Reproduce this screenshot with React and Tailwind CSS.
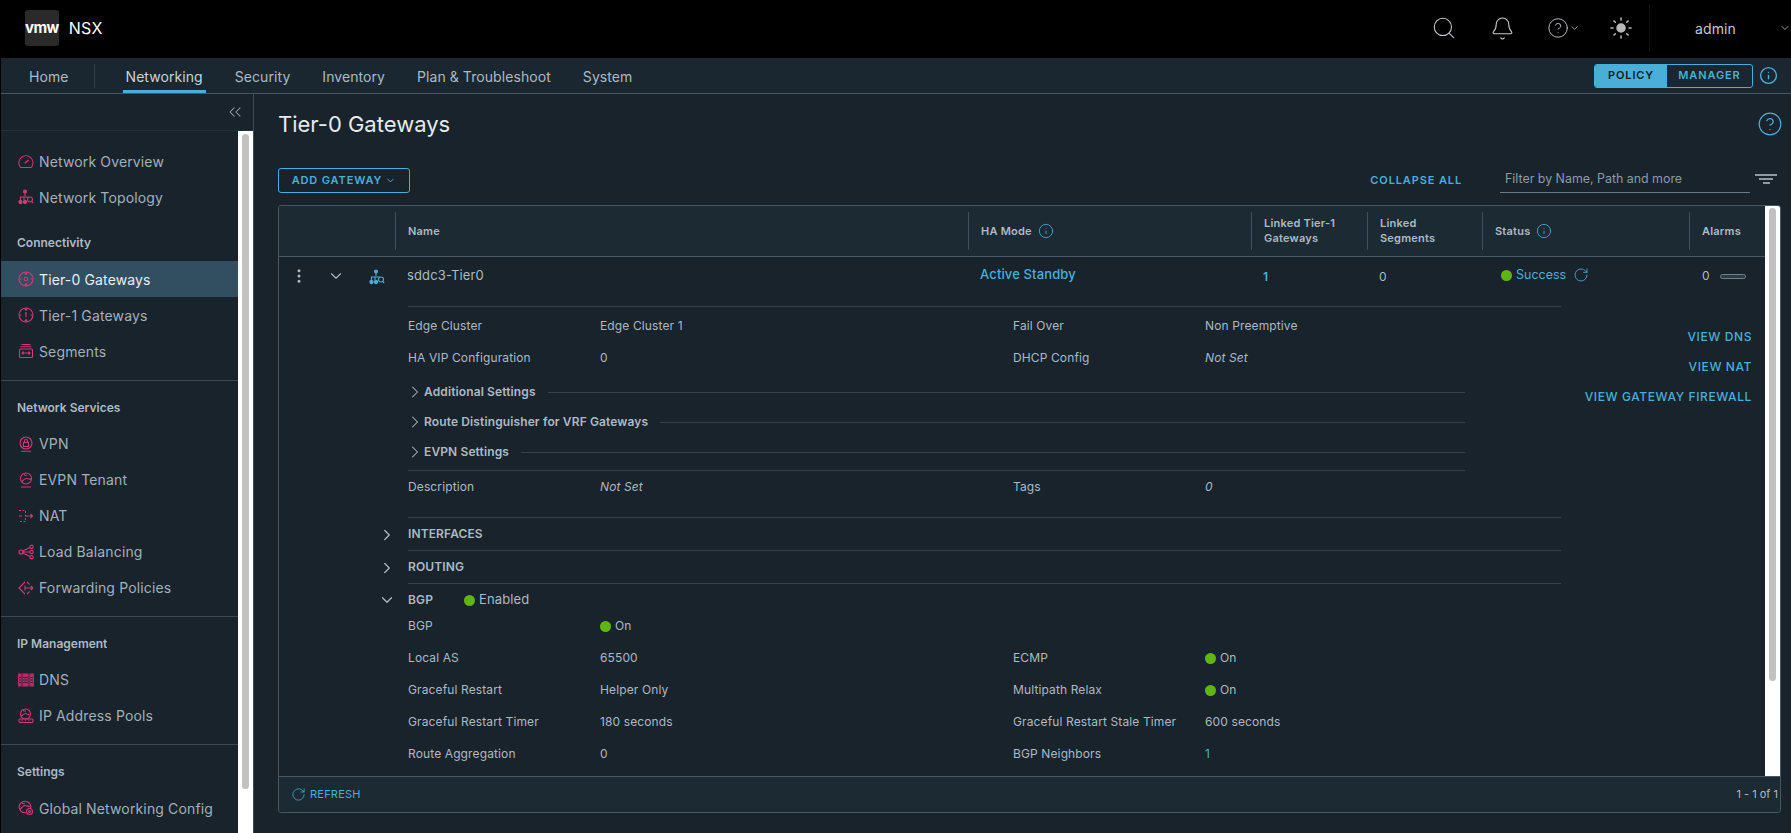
import {
  Bell,
  ChevronDown,
  ChevronRight,
  ChevronsLeft,
  CircleHelp,
  EllipsisVertical,
  Info,
  RotateCw,
  Search,
  Sun,
} from "lucide-react";

const font = { fontFamily: '"Inter", "Noto Sans", sans-serif' };

function Svg({ children, className = "text-[#d8357a]" }) {
  return (
    <svg viewBox="0 0 16 16" fill="none" stroke="currentColor" strokeWidth="1.1" className={`w-[16px] h-[16px] shrink-0 ${className}`}>
      {children}
    </svg>
  );
}

const GaugeIcon = () => (
  <Svg>
    <path d="M3 14.5h10a1.5 1.5 0 0 0 1-1.2A7 7 0 1 0 1.9 13.3a1.5 1.5 0 0 0 1.1 1.2z" />
    <path d="M6.8 10.2l3.8-3.2" strokeWidth="1.5" />
  </Svg>
);

const TopologyIcon = ({ className }) => (
  <Svg className={className}>
    <circle cx="7" cy="2.5" r="1.5" fill="currentColor" />
    <path d="M7 4v3M2.5 11V8h8M6 8v3" />
    <circle cx="2.5" cy="13" r="1.6" fill="currentColor" />
    <circle cx="7" cy="13" r="1.6" fill="currentColor" />
    <circle cx="12" cy="10.5" r="2.5" />
    <path d="M13.7 12.4l1.5 1.8" />
  </Svg>
);

const TierIcon = ({ label }) => (
  <Svg>
    <circle cx="8" cy="8" r="7" />
    <path d="M8 1.5v2.5M8 12v2.5M1.5 8h2M12.5 8h2M6.8 2.8L8 1.6l1.2 1.2M6.8 13.2L8 14.4l1.2-1.2" />
    {label === "0" ? <circle cx="8" cy="8" r="1.8" /> : <path d="M7 6.5L8 5.8V10.2" />}
  </Svg>
);

const SegmentsIcon = () => (
  <Svg>
    <rect x="1.5" y="6" width="13" height="8.5" rx="1" />
    <path d="M3.5 1.5h9M2.5 3.8h11M4 10h8M5.5 8.5L4 10l1.5 1.5M10.5 8.5L12 10l-1.5 1.5" />
  </Svg>
);

const VpnIcon = () => (
  <Svg>
    <circle cx="8" cy="7" r="6" />
    <rect x="5.5" y="6.5" width="5" height="4" />
    <path d="M6.5 6.5V5a1.5 1.5 0 0 1 3 0v1.5M3 15.2h10" />
  </Svg>
);

const EvpnIcon = () => (
  <Svg>
    <circle cx="8" cy="6.5" r="5.5" />
    <path d="M3.5 9.5c2-1 2.5-3 5-3s3 1 4.5 .5M6 1.5c0 2 2 2 3 1.5M3 15h10" />
  </Svg>
);

const NatIcon = () => (
  <Svg>
    <path d="M1 2.5h6.5V13.5H1" strokeDasharray="2 1.5" />
    <path d="M1 8h3M7.5 8h7M12.5 6l2 2-2 2" />
  </Svg>
);

const ShareIcon = () => (
  <Svg>
    <circle cx="3" cy="8" r="2" />
    <circle cx="13.5" cy="2.8" r="1.7" />
    <circle cx="13.5" cy="8" r="1.7" />
    <circle cx="13.5" cy="13.2" r="1.7" />
    <path d="M5 8h7M4.8 7l7.2-3.5M4.8 9l7.2 3.5" />
  </Svg>
);

const ForwardIcon = () => (
  <Svg>
    <path d="M7 2L1 8l6 6M9 2l2.5 2.5M9 14l2.5-2.5" />
    <path d="M7 5.5v5M7 8h8M12.8 6l2 2-2 2" />
  </Svg>
);

const DnsIcon = () => (
  <svg viewBox="0 0 16 16" className="w-[16px] h-[16px] shrink-0 text-[#b32c68]">
    <rect x="0" y="1.5" width="16" height="13" fill="currentColor" />
    <path d="M4 1.5v13M11 1.5v13M1 5.5h2M1 8h2M1 10.5h2M5 5.5h5M5 8h5M5 10.5h5M12 5.5h3M12 8h3M12 10.5h3" stroke="#18232c" strokeWidth="0.8" />
  </svg>
);

const PoolIcon = () => (
  <Svg>
    <circle cx="7.5" cy="6" r="5" />
    <path d="M3.5 8c1.5-1 2-2.5 4-2.5S10 7 11.5 6.5M5 1.5c0 2 2 1.5 3 1.5" />
    <rect x="1" y="11" width="14" height="3.5" rx="1" />
    <path d="M3.5 12.8h1M7 12.8h1M10.5 12.8h1" />
  </Svg>
);

const GlobalIcon = () => (
  <Svg>
    <circle cx="7" cy="7" r="5.8" />
    <path d="M2 9c2-1 2.5-3.5 5-3.5S9 7 12 6.5M4 2c0 2 2 2 3 1.5" />
    <circle cx="11.5" cy="11.5" r="3" fill="#18232c" />
    <circle cx="11.5" cy="11.5" r="1" />
  </Svg>
);

const sideGroups = [
  {
    title: null,
    items: [
      ["Network Overview", <GaugeIcon />],
      ["Network Topology", <TopologyIcon />],
    ],
  },
  {
    title: "Connectivity",
    items: [
      ["Tier-0 Gateways", <TierIcon label="0" />, true],
      ["Tier-1 Gateways", <TierIcon label="1" />],
      ["Segments", <SegmentsIcon />],
    ],
  },
  {
    title: "Network Services",
    items: [
      ["VPN", <VpnIcon />],
      ["EVPN Tenant", <EvpnIcon />],
      ["NAT", <NatIcon />],
      ["Load Balancing", <ShareIcon />],
      ["Forwarding Policies", <ForwardIcon />],
    ],
  },
  {
    title: "IP Management",
    items: [
      ["DNS", <DnsIcon />],
      ["IP Address Pools", <PoolIcon />],
    ],
  },
  {
    title: "Settings",
    items: [["Global Networking Config", <GlobalIcon />]],
  },
];

function Sidebar() {
  return (
    <aside className="w-[253px] shrink-0 flex flex-col border-r border-[#3c4c58] overflow-hidden">
      <div className="h-[37px] shrink-0 flex items-center justify-end pr-[8px] border-b border-[#22303a]">
        <ChevronsLeft className="w-[20px] h-[20px] text-[#8c9ba5]" strokeWidth={1.25} />
      </div>
      <div className="flex flex-1 min-h-0">
        <div className="w-[237px] shrink-0 pt-[12px]">
          {sideGroups.map((group, i) => (
            <div key={i} className={i > 1 ? "border-t border-[#3b4a56] pt-[9px] pb-[10.3px]" : "pb-[10.3px]"}>
              {group.title && (
                <div className="h-[36px] flex items-center pl-[16px] text-[12px] font-semibold text-[#acbac3]">{group.title}</div>
              )}
              {group.items.map(([label, icon, active]) => (
                <div
                  key={label}
                  className={`h-[36px] flex items-center gap-[5px] pl-[17px] text-[14px] tracking-[0.01em] ${
                    active ? "bg-[#324f62] text-[#e9edf0]" : "text-[#a3b0b9]"
                  }`}
                >
                  {icon}
                  <span>{label}</span>
                </div>
              ))}
            </div>
          ))}
        </div>
        <div className="flex-1 bg-white px-[4px] pt-[3px]">
          <div className="h-[655px] rounded-[4px] bg-[#c1c1c1]" />
        </div>
      </div>
    </aside>
  );
}

function Dot() {
  return <span className="block w-[11px] h-[11px] rounded-full bg-[#60b515] shrink-0" />;
}

function Pair({ label, value, label2, value2 }) {
  return (
    <div className="grid grid-cols-[192px_413px_192px_1fr] h-[32px] items-center text-[12px] tracking-[0.01em] text-[#acbac3]">
      <span>{label}</span>
      <span className="flex items-center gap-[4px]">{value}</span>
      <span>{label2}</span>
      <span className="flex items-center gap-[4px]">{value2}</span>
    </div>
  );
}

function SubSection({ label }) {
  return (
    <div className="h-[30px] w-[1057px] flex items-center">
      <ChevronRight className="w-[20px] h-[20px] text-[#acbac3] -ml-[3px] -mr-[1px]" strokeWidth={1.25} />
      <span className="text-[12px] font-semibold tracking-[0.01em] text-[#acbac3] mr-[12px]">{label}</span>
      <span className="flex-1 border-t border-[#33424d]" />
    </div>
  );
}

function SectionHead({ open, label, extra, className = "h-[33px]" }) {
  const Chevron = open ? ChevronDown : ChevronRight;
  return (
    <div className={`flex ${className}`}>
      <div className="w-[129px] shrink-0 flex items-center justify-end pr-[12px]">
        <Chevron className="w-[18px] h-[18px] text-[#acbac3]" strokeWidth={1.75} />
      </div>
      <div className={`flex-1 flex items-center text-[12px] font-semibold tracking-[0.01em] text-[#acbac3] ${open ? "" : "border-b border-[#33424d]"}`}>
        <span className="w-[56px]">{label}</span>
        {extra}
      </div>
    </div>
  );
}

const cols = "grid grid-cols-[116px_573px_283px_116px_115px_207px_76px]";

function HeadCell({ children }) {
  return (
    <div className="my-[6px] border-l border-[#3f4f5b] pl-[12px] flex items-center gap-[6px] text-[11px] leading-[15px] font-semibold text-[#acbac3] tracking-[0.02em]">
      {children}
    </div>
  );
}

function GatewayTable() {
  return (
    <div className="mt-[12px] h-[608px] border border-[#475864] rounded-[3px] flex flex-col overflow-hidden">
      <div className="flex flex-1 min-h-0">
        <div className="w-[1486px] shrink-0 overflow-hidden">
          <div className={`${cols} h-[51px] bg-[#1c2a34] border-b border-[#475864]`}>
            <div />
            <HeadCell>Name</HeadCell>
            <HeadCell>
              HA Mode <Info className="w-[16px] h-[16px] text-[#49afd9]" strokeWidth={1.25} />
            </HeadCell>
            <HeadCell>
              <span>
                Linked Tier-1
                <br />
                Gateways
              </span>
            </HeadCell>
            <HeadCell>
              <span>
                Linked
                <br />
                Segments
              </span>
            </HeadCell>
            <HeadCell>
              Status <Info className="w-[16px] h-[16px] text-[#49afd9]" strokeWidth={1.25} />
            </HeadCell>
            <HeadCell>Alarms</HeadCell>
          </div>

          <div className={`${cols} h-[49px] text-[12px] text-[#acbac3]`}>
            <div className="flex items-start pt-[10px] pl-[11px]">
              <EllipsisVertical className="w-[18px] h-[18px] text-[#acbac3]" />
              <ChevronDown className="w-[18px] h-[18px] ml-[19px]" strokeWidth={1.5} />
              <span className="ml-[24px] mt-[2px]">
                <TopologyIcon className="text-[#49afd9]" />
              </span>
            </div>
            <div className="pl-[12px] pt-[9px] text-[13px] tracking-[0.01em]">sddc3-Tier0</div>
            <div className="pl-[12px] pt-[8px] text-[13px] tracking-[0.01em] text-[#49afd9] font-medium">Active Standby</div>
            <div className="pl-[12px] pt-[11px] text-[#49afd9] font-semibold">1</div>
            <div className="pl-[12px] pt-[11px]">0</div>
            <div className="pl-[19px] pt-[8px] flex items-start gap-[4px] text-[12.5px] leading-[20px] text-[#49afd9]">
              <span className="mt-[5px]">
                <Dot />
              </span>
              Success
              <RotateCw className="w-[16px] h-[16px] ml-[3px] mt-[2px]" strokeWidth={1.25} />
            </div>
            <div className="pl-[13px] pt-[10px] flex items-start gap-[10px]">
              0<span className="mt-[7px] w-[26px] h-[5px] rounded-full border border-[#6f808c] bg-[#2d3b45]" />
            </div>
          </div>

          <div className="flex">
            <div className="w-[1282px] shrink-0">
              <div className="ml-[129px] border-t border-[#33424d] pt-[3px]">
                <Pair label="Edge Cluster" value="Edge Cluster 1" label2="Fail Over" value2="Non Preemptive" />
                <Pair label="HA VIP Configuration" value="0" label2="DHCP Config" value2={<em>Not Set</em>} />
                <div className="pt-[3px]">
                  <SubSection label="Additional Settings" />
                  <SubSection label="Route Distinguisher for VRF Gateways" />
                  <SubSection label="EVPN Settings" />
                </div>
                <div className="w-[1057px] mt-[3px] border-t border-[#33424d]" />
                <Pair label="Description" value={<em>Not Set</em>} label2="Tags" value2={<em>0</em>} />
              </div>
              <div className="ml-[129px] h-[15px] border-b border-[#33424d]" />
              <SectionHead label="INTERFACES" />
              <SectionHead label="ROUTING" />
              <SectionHead
                open
                label="BGP"
                className="h-[29px] pt-[3px]"
                extra={
                  <span className="flex items-center gap-[4px] text-[13px] font-normal">
                    <Dot /> Enabled
                  </span>
                }
              />
              <div className="ml-[129px] -mt-[3px]">
                <Pair label="BGP" value={<><Dot /> On</>} />
                <Pair label="Local AS" value="65500" label2="ECMP" value2={<><Dot /> On</>} />
                <Pair label="Graceful Restart" value="Helper Only" label2="Multipath Relax" value2={<><Dot /> On</>} />
                <Pair label="Graceful Restart Timer" value="180 seconds" label2="Graceful Restart Stale Timer" value2="600 seconds" />
                <Pair label="Route Aggregation" value="0" label2="BGP Neighbors" value2={<span className="text-[#49afd9]">1</span>} />
              </div>
            </div>
            <div className="flex-1 flex flex-col items-end pr-[13px] pt-[23px] gap-[14px] text-[12px] leading-[16px] font-medium tracking-[0.05em] text-[#49afd9] whitespace-nowrap">
              <span>VIEW DNS</span>
              <span>VIEW NAT</span>
              <span>VIEW GATEWAY FIREWALL</span>
            </div>
          </div>
        </div>
        <div className="flex-1 bg-white px-[4px] pt-[2px]">
          <div className="h-[473px] rounded-[4px] bg-[#c1c1c1]" />
        </div>
      </div>
      <div className="h-[36px] shrink-0 bg-[#1c2a34] border-t border-[#475864] flex items-center pl-[12px] pr-[2px] text-[11px]">
        <RotateCw className="w-[15px] h-[15px] text-[#49afd9]" strokeWidth={1.25} />
        <span className="ml-[4px] tracking-[0.02em] text-[#49afd9]">REFRESH</span>
        <span className="ml-auto text-[#acbac3]">1 - 1 of 1</span>
      </div>
    </div>
  );
}

export default function App() {
  return (
    <div className="h-screen w-screen overflow-hidden bg-black pl-px flex flex-col" style={font}>
      <header className="h-[58px] shrink-0 flex items-center bg-black pb-[2px]">
        <div className="ml-[24px] w-[36px] h-[36px] rounded-[3px] bg-[#2a2a2a] flex items-center justify-center text-white font-bold text-[15px] tracking-[-0.04em]">
          vmw
        </div>
        <span className="ml-[10px] text-[16px] text-white tracking-[0.02em]">NSX</span>
        <Search className="ml-[1328px] w-[28px] h-[28px] text-[#c5c9cc]" strokeWidth={1} />
        <Bell className="ml-[33px] w-[27px] h-[27px] text-[#c5c9cc]" strokeWidth={1} />
        <CircleHelp className="ml-[32px] w-[24px] h-[24px] text-[#c5c9cc]" strokeWidth={1} />
        <ChevronDown className="w-[12px] h-[12px] text-[#9aa1a6]" />
        <Sun className="ml-[29px] w-[26px] h-[26px] text-[#b8b8b8]" fill="currentColor" strokeWidth={1.5} />
        <span className="ml-[16px] h-[48px] border-l border-[#111111]" />
        <span className="ml-[45px] text-[14px] tracking-[0.01em] text-[#c5c9cc]">admin</span>
        <ChevronDown className="ml-[43px] w-[12px] h-[12px] shrink-0 text-[#9aa1a6]" />
      </header>

      <nav className="h-[36px] shrink-0 flex items-center bg-[#1a2730] border-b border-[#475864] pl-[28px] text-[14px] tracking-[0.005em] text-[#acbac3]">
        <span className="pt-[2px]">Home</span>
        <span className="ml-[25px] h-[24px] border-l border-[#33424d]" />
        <div className="ml-[28px] flex gap-[26px] h-full">
          <span className="px-[3px] h-full flex items-center border-b-[3px] border-[#49afd9] pt-[4px] text-[#c9d3d9] -mb-px">Networking</span>
          <span className="px-[3px] pt-[2px] flex items-center">Security</span>
          <span className="px-[3px] pt-[2px] flex items-center">Inventory</span>
          <span className="px-[3px] pt-[2px] flex items-center">Plan &amp; Troubleshoot</span>
          <span className="px-[3px] pt-[2px] flex items-center">System</span>
        </div>
        <div className="ml-auto flex items-center mr-[13px]">
          <div className="flex h-[24px] w-[159px] border border-[#49afd9] rounded-[3px] overflow-hidden text-[11px] font-semibold tracking-[0.08em]">
            <span className="w-[72px] bg-[#49afd9] text-[#0f1c25] flex items-center justify-center">POLICY</span>
            <span className="flex-1 text-[#49afd9] flex items-center justify-center">MANAGER</span>
          </div>
          <Info className="ml-[6px] w-[19px] h-[19px] text-[#49afd9]" strokeWidth={1.75} />
        </div>
      </nav>

      <div className="flex flex-1 min-h-0 bg-[#18232c]">
        <Sidebar />
        <main className="flex-1 min-w-0 pl-[24px] pr-[10px]">
          <div className="h-[60px] flex items-center justify-between">
            <h1 className="text-[22px] text-[#e6eaed]">Tier-0 Gateways</h1>
            <CircleHelp className="-mr-[2px] w-[26px] h-[26px] text-[#49afd9]" strokeWidth={1.1} />
          </div>
          <div className="mt-[14px] h-[25px] flex items-center">
            <button className="h-[25px] w-[132px] pb-[1px] border border-[#49afd9] rounded-[3px] flex items-center justify-center gap-[3px] text-[11px] font-semibold tracking-[0.08em] text-[#49afd9]">
              ADD GATEWAY <ChevronDown className="w-[11px] h-[11px]" />
            </button>
            <span className="ml-auto pb-[1px] text-[11px] font-semibold tracking-[0.08em] text-[#49afd9]">COLLAPSE ALL</span>
            <div className="ml-[38px] w-[250px] h-full pb-[1px] border-b border-[#6a7a86] flex items-center pl-[5px] text-[12.4px] text-[#8c9ba5]">
              Filter by Name, Path and more
            </div>
            <div className="ml-[5px] mr-[4px] w-[22px] flex flex-col items-center gap-[2px] mb-[4px]">
              <span className="w-[22px] h-[2px] bg-[#8c9ba5]" />
              <span className="w-[14px] h-[2px] bg-[#8c9ba5]" />
              <span className="w-[7px] h-[2px] bg-[#8c9ba5]" />
            </div>
          </div>
          <GatewayTable />
        </main>
      </div>
    </div>
  );
}
